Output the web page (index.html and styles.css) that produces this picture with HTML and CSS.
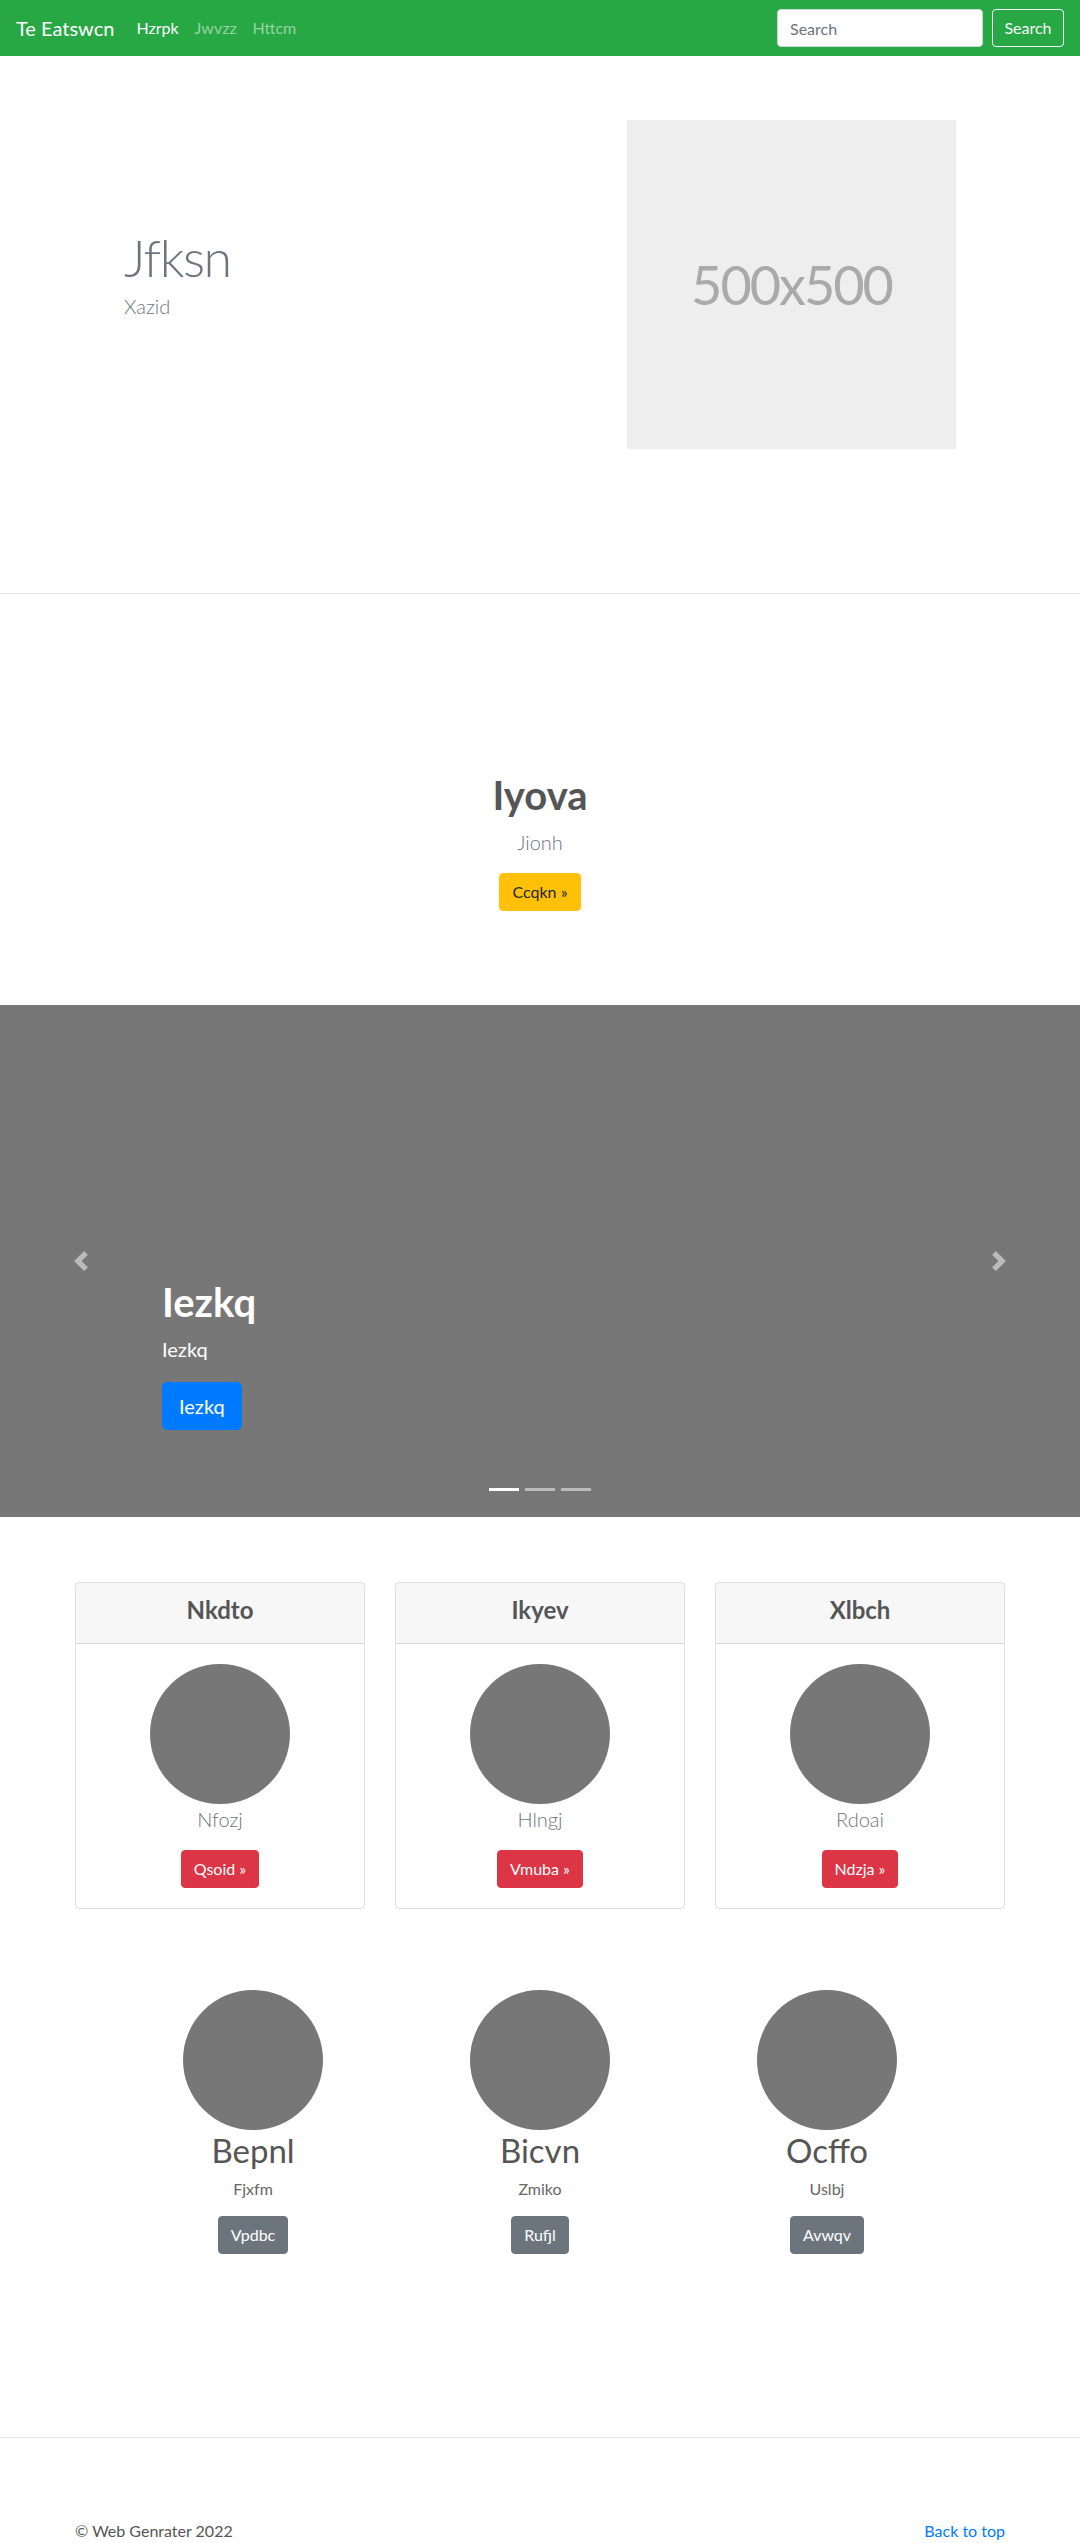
FILE: index.html
```html
<!DOCTYPE html>
<html lang="en">
<head>
<meta charset="utf-8">
<title>Te Eatswcn</title>
<link rel="stylesheet" href="styles.css">
</head>
<body>
<nav class="navbar">
  <a class="brand" href="#">Te Eatswcn</a>
  <ul class="nav-links">
    <li><a class="nav-link active" href="#">Hzrpk</a></li>
    <li><a class="nav-link" href="#">Jwvzz</a></li>
    <li><a class="nav-link" href="#">Httcm</a></li>
  </ul>
  <form class="search">
    <input class="search-input" type="text" placeholder="Search">
    <button class="btn btn-outline-light" type="button">Search</button>
  </form>
</nav>

<section class="hero">
  <div class="container hero-row">
    <div class="hero-text">
      <h1 class="hero-title">Jfksn</h1>
      <p class="lead">Xazid</p>
    </div>
    <div class="placeholder">500x500</div>
  </div>
</section>

<section class="callout">
  <h1 class="callout-title">Iyova</h1>
  <p class="lead callout-lead">Jionh</p>
  <a class="btn btn-warning" href="#">Ccqkn &raquo;</a>
</section>

<div class="carousel">
  <div class="carousel-item">
    <div class="carousel-caption">
      <h1 class="caption-title">Iezkq</h1>
      <p class="caption-text">Iezkq</p>
      <div class="caption-actions"><a class="btn btn-lg btn-primary" href="#">Iezkq</a></div>
    </div>
  </div>
  <a class="ctrl ctrl-prev" href="#">
    <svg class="ctrl-icon" viewBox="0 0 8 8" width="20" height="20"><path fill="#fff" d="M5.25 0l-4 4 4 4 1.5-1.5L4.25 4l2.5-2.5L5.25 0z"/></svg>
  </a>
  <a class="ctrl ctrl-next" href="#">
    <svg class="ctrl-icon" viewBox="0 0 8 8" width="20" height="20"><path fill="#fff" d="M2.75 0l-1.5 1.5L3.75 4l-2.5 2.5L2.75 8l4-4-4-4z"/></svg>
  </a>
  <ol class="indicators">
    <li class="active"></li>
    <li></li>
    <li></li>
  </ol>
</div>

<section class="cards">
  <div class="container card-grid">
    <div class="card">
      <div class="card-header"><h4 class="card-title">Nkdto</h4></div>
      <div class="card-body">
        <div class="circle"></div>
        <p class="card-name">Nfozj</p>
        <a class="btn btn-danger" href="#">Qsoid &raquo;</a>
      </div>
    </div>
    <div class="card">
      <div class="card-header"><h4 class="card-title">Ikyev</h4></div>
      <div class="card-body">
        <div class="circle"></div>
        <p class="card-name">Hlngj</p>
        <a class="btn btn-danger" href="#">Vmuba &raquo;</a>
      </div>
    </div>
    <div class="card">
      <div class="card-header"><h4 class="card-title">Xlbch</h4></div>
      <div class="card-body">
        <div class="circle"></div>
        <p class="card-name">Rdoai</p>
        <a class="btn btn-danger" href="#">Ndzja &raquo;</a>
      </div>
    </div>
  </div>
</section>

<section class="team">
  <div class="team-grid">
    <div class="member">
      <div class="circle"></div>
      <h2 class="member-name">Bepnl</h2>
      <p class="member-role">Fjxfm</p>
      <a class="btn btn-secondary" href="#">Vpdbc</a>
    </div>
    <div class="member">
      <div class="circle"></div>
      <h2 class="member-name">Bicvn</h2>
      <p class="member-role">Zmiko</p>
      <a class="btn btn-secondary" href="#">Rufjl</a>
    </div>
    <div class="member">
      <div class="circle"></div>
      <h2 class="member-name">Ocffo</h2>
      <p class="member-role">Uslbj</p>
      <a class="btn btn-secondary" href="#">Avwqv</a>
    </div>
  </div>
</section>

<footer class="footer">
  <div class="container footer-row">
    <p class="copy">&copy; Web Genrater 2022</p>
    <p class="back"><a href="#">Back to top</a></p>
  </div>
</footer>
</body>
</html>
```

FILE: styles.css
```css
* { box-sizing: border-box; }

body {
  margin: 0;
  font-family: Lato, "Open Sans", "Noto Sans", sans-serif;
  font-size: 16px;
  line-height: 1.5;
  color: #212529;
  background: #fff;
}

a { text-decoration: none; }

.container {
  width: 930px;
  margin: 0 auto;
}

/* Navbar */
.navbar {
  display: flex;
  align-items: center;
  height: 56px;
  padding: 8px 16px;
  background: #28a745;
}
.brand {
  font-size: 20px;
  line-height: 30px;
  padding: 5px 0;
  margin-right: 14px;
  color: #fff;
}
.nav-links {
  display: flex;
  flex: 1;
  list-style: none;
  margin: 0;
  padding: 0;
}
.nav-link {
  display: block;
  padding: 8px;
  color: rgba(255, 255, 255, 0.5);
}
.nav-link.active { color: #fff; }
.search {
  display: flex;
  align-items: center;
  margin: 0;
}
.search-input {
  width: 206px;
  height: 38px;
  padding: 6px 12px;
  margin-right: 9px;
  font-family: inherit;
  font-size: 16px;
  line-height: 1.5;
  color: #495057;
  background: #fff;
  border: 1px solid #ced4da;
  border-radius: 4px;
}
.search-input::placeholder { color: #6c757d; }

/* Buttons */
.btn {
  display: inline-block;
  font-family: inherit;
  font-size: 16px;
  line-height: 24px;
  padding: 6px 12px;
  border: 1px solid transparent;
  border-radius: 4px;
  cursor: pointer;
  text-align: center;
  white-space: nowrap;
}
.btn-outline-light {
  width: 72px;
  padding: 6px 0;
  color: #f8f9fa;
  background: transparent;
  border-color: #f8f9fa;
}
.btn-warning { color: #212529; background: #ffc107; border-color: #ffc107; }
.btn-primary { color: #fff; background: #007bff; border-color: #007bff; }
.btn-danger { color: #fff; background: #dc3545; border-color: #dc3545; }
.btn-secondary { color: #fff; background: #6c757d; border-color: #6c757d; }
.btn-lg {
  font-size: 20px;
  line-height: 30px;
  padding: 8px 16px;
  border-radius: 5px;
}

/* Hero */
.hero {
  padding: 64px 0 144px;
  border-bottom: 1px solid #e5e5e5;
}
.hero-row {
  display: flex;
  align-items: center;
  justify-content: space-between;
}
.hero-text {
  padding-left: 49px;
  padding-bottom: 22px;
}
.hero-title {
  margin: 0 0 2px;
  font-size: 52px;
  font-weight: 300;
  line-height: 1.2;
  letter-spacing: -1.5px;
  color: #6c757d;
}
.lead {
  margin: 0;
  font-size: 20px;
  font-weight: 300;
  line-height: 30px;
  color: #6c757d;
}
.placeholder {
  display: flex;
  align-items: center;
  justify-content: center;
  width: 329px;
  height: 329px;
  margin-right: 49px;
  background: #eee;
  color: #aaa;
  font-size: 54px;
  letter-spacing: -2px;
}

/* Callout */
.callout {
  padding: 177px 0 94px;
  text-align: center;
}
.callout-title {
  margin: 0 0 8px;
  font-size: 40px;
  font-weight: 700;
  line-height: 48px;
  color: #555;
}
.callout-lead { margin-bottom: 16px; }

/* Carousel */
.carousel {
  position: relative;
  height: 512px;
  overflow: hidden;
  background: #777;
}
.carousel-item {
  height: 100%;
}
.carousel-caption {
  position: absolute;
  left: 15%;
  right: 15%;
  bottom: 48px;
  padding: 20px 0;
  color: #fff;
  text-align: left;
  z-index: 10;
}
.caption-title {
  margin: 0 0 8px;
  font-size: 40px;
  font-weight: 700;
  line-height: 48px;
}
.caption-text {
  margin: 0 0 18px;
  font-size: 20px;
  line-height: 30px;
}
.caption-actions {
  display: flex;
  margin-bottom: 19px;
}
.ctrl {
  position: absolute;
  top: 0;
  bottom: 0;
  width: 15%;
  display: flex;
  align-items: center;
  justify-content: center;
  opacity: 0.5;
}
.ctrl-prev { left: 0; }
.ctrl-next { right: 0; }
.ctrl-icon { display: block; }
.indicators {
  position: absolute;
  left: 0;
  right: 0;
  bottom: 16px;
  display: flex;
  justify-content: center;
  list-style: none;
  margin: 0;
  padding: 0;
}
.indicators li {
  width: 30px;
  height: 23px;
  margin: 0 3px;
  background: #fff;
  background-clip: padding-box;
  border-top: 10px solid transparent;
  border-bottom: 10px solid transparent;
  opacity: 0.5;
}
.indicators li.active { opacity: 1; }

/* Cards */
.cards { padding-top: 65px; }
.card-grid {
  display: grid;
  grid-template-columns: repeat(3, 1fr);
  gap: 30px;
}
.card {
  border: 1px solid rgba(0, 0, 0, 0.125);
  border-radius: 4px;
  overflow: hidden;
  text-align: center;
}
.card-header {
  padding: 9px 20px 15px;
  background: rgba(0, 0, 0, 0.03);
  border-bottom: 1px solid rgba(0, 0, 0, 0.125);
}
.card-title {
  margin: 0;
  font-size: 24px;
  font-weight: 700;
  line-height: 36px;
  color: #555;
}
.card-body { padding: 20px; }
.circle {
  width: 140px;
  height: 140px;
  margin: 0 auto;
  border-radius: 50%;
  background: #777;
}
.card-name {
  margin: 0 0 16px;
  font-size: 20px;
  font-weight: 300;
  line-height: 30px;
  color: #6c757d;
}

/* Team */
.team { padding-top: 81px; }
.team-grid {
  display: grid;
  grid-template-columns: repeat(3, 287px);
  justify-content: center;
}
.member { text-align: center; }
.member-name {
  margin: 0 0 7px;
  font-size: 33px;
  font-weight: 400;
  line-height: 40px;
  color: #555;
}
.member-role {
  margin: 0 0 15px;
  font-size: 16px;
  font-weight: 400;
  line-height: 24px;
  color: #666;
}

/* Footer */
.footer {
  margin-top: 183px;
  padding-top: 81px;
  border-top: 1px solid #e5e5e5;
}
.footer-row {
  display: flex;
  justify-content: space-between;
}
.copy, .back { margin: 0 0 16px; }
.copy { color: #555; }
.back a { color: #007bff; }
```
